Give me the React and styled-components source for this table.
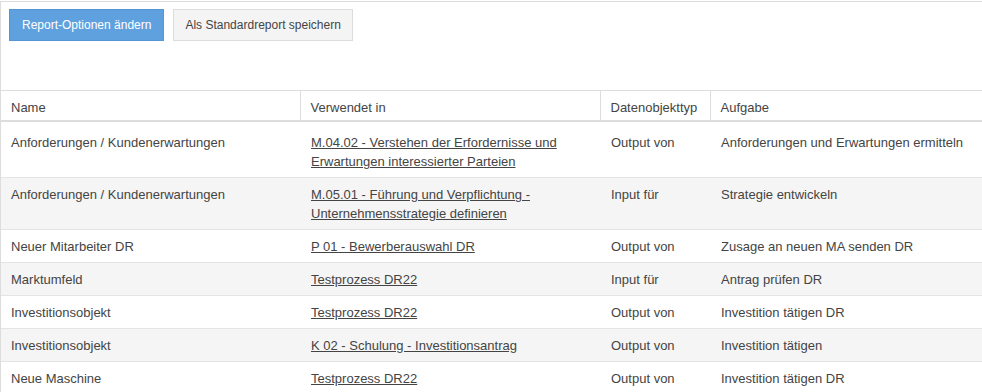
import React from "react";
import styled, { createGlobalStyle } from "styled-components";

const GlobalStyle = createGlobalStyle`
	html, body {
		margin: 0;
		padding: 0;
		background: #fff;
		overflow: hidden;
	}
	body {
		font-family: "Liberation Sans", Arial, sans-serif;
		color: #333;
	}
`;

const Panel = styled.div`
	width: 1000px;
	margin-top: 1px;
	border: 1px solid #ddd;
	border-right: none;
	background: #fff;
`;

const Toolbar = styled.div`
	display: flex;
	gap: 9px;
	padding: 7px 8px 0;
	height: 81px;
`;

const Button = styled.button`
	height: 32px;
	padding: 0 ${p => (p.$primary ? "12px" : "11px")};
	font-family: "Liberation Sans", Arial, sans-serif;
	font-size: 12px;
	border-radius: 0;
	border: 1px solid ${p => (p.$primary ? "#5596d4" : "#dcdcdc")};
	background: ${p => (p.$primary ? "#5fa1de" : "#f4f4f4")};
	color: ${p => (p.$primary ? "#fff" : "#444")};
	cursor: pointer;
`;

const Table = styled.table`
	width: 100%;
	table-layout: fixed;
	border-collapse: collapse;
	font-size: 13px;
	line-height: 19px;
	color: #444;
`;

const HeadCell = styled.th`
	text-align: left;
	font-weight: normal;
	padding: 7px 10px 3px;
	border-top: 1px solid #ddd;
	border-bottom: 2px solid #ddd;
	border-left: 1px solid #ddd;
	&:first-child {
		border-left: none;
	}
`;

const Row = styled.tr`
	background: ${p => (p.$striped ? "#f5f5f5" : "#fff")};
	border-bottom: 1px solid #e4e4e4;
`;

const Cell = styled.td`
	vertical-align: top;
	padding: ${p => (p.$first ? "11px 10px 6px 11px" : "7px 10px 6px 11px")};
	&:first-child {
		padding-left: 10px;
	}
`;

const Link = styled.a`
	color: #444;
	text-decoration: underline;
	cursor: pointer;
`;

const rows = [
	["Anforderungen / Kundenerwartungen", "M.04.02 - Verstehen der Erfordernisse und Erwartungen interessierter Parteien", "Output von", "Anforderungen und Erwartungen ermitteln"],
	["Anforderungen / Kundenerwartungen", "M.05.01 - Führung und Verpflichtung - Unternehmensstrategie definieren", "Input für", "Strategie entwickeln"],
	["Neuer Mitarbeiter DR", "P 01 - Bewerberauswahl DR", "Output von", "Zusage an neuen MA senden DR"],
	["Marktumfeld", "Testprozess DR22", "Input für", "Antrag prüfen DR"],
	["Investitionsobjekt", "Testprozess DR22", "Output von", "Investition tätigen DR"],
	["Investitionsobjekt", "K 02 - Schulung - Investitionsantrag", "Output von", "Investition tätigen"],
	["Neue Maschine", "Testprozess DR22", "Output von", "Investition tätigen DR"],
];

export default function App() {
	return (
		<>
			<GlobalStyle />
			<Panel>
				<Toolbar>
					<Button $primary>Report-Optionen ändern</Button>
					<Button>Als Standardreport speichern</Button>
				</Toolbar>
				<Table>
					<colgroup>
						<col style={{ width: 299 }} />
						<col style={{ width: 300 }} />
						<col style={{ width: 110 }} />
						<col />
					</colgroup>
					<thead>
						<tr>
							<HeadCell>Name</HeadCell>
							<HeadCell>Verwendet in</HeadCell>
							<HeadCell>Datenobjekttyp</HeadCell>
							<HeadCell>Aufgabe</HeadCell>
						</tr>
					</thead>
					<tbody>
						{rows.map((r, i) => (
							<Row key={i} $striped={i % 2 === 1}>
								<Cell $first={i === 0}>{r[0]}</Cell>
								<Cell $first={i === 0}><Link>{r[1]}</Link></Cell>
								<Cell $first={i === 0}>{r[2]}</Cell>
								<Cell $first={i === 0}>{r[3]}</Cell>
							</Row>
						))}
					</tbody>
				</Table>
			</Panel>
		</>
	);
}
